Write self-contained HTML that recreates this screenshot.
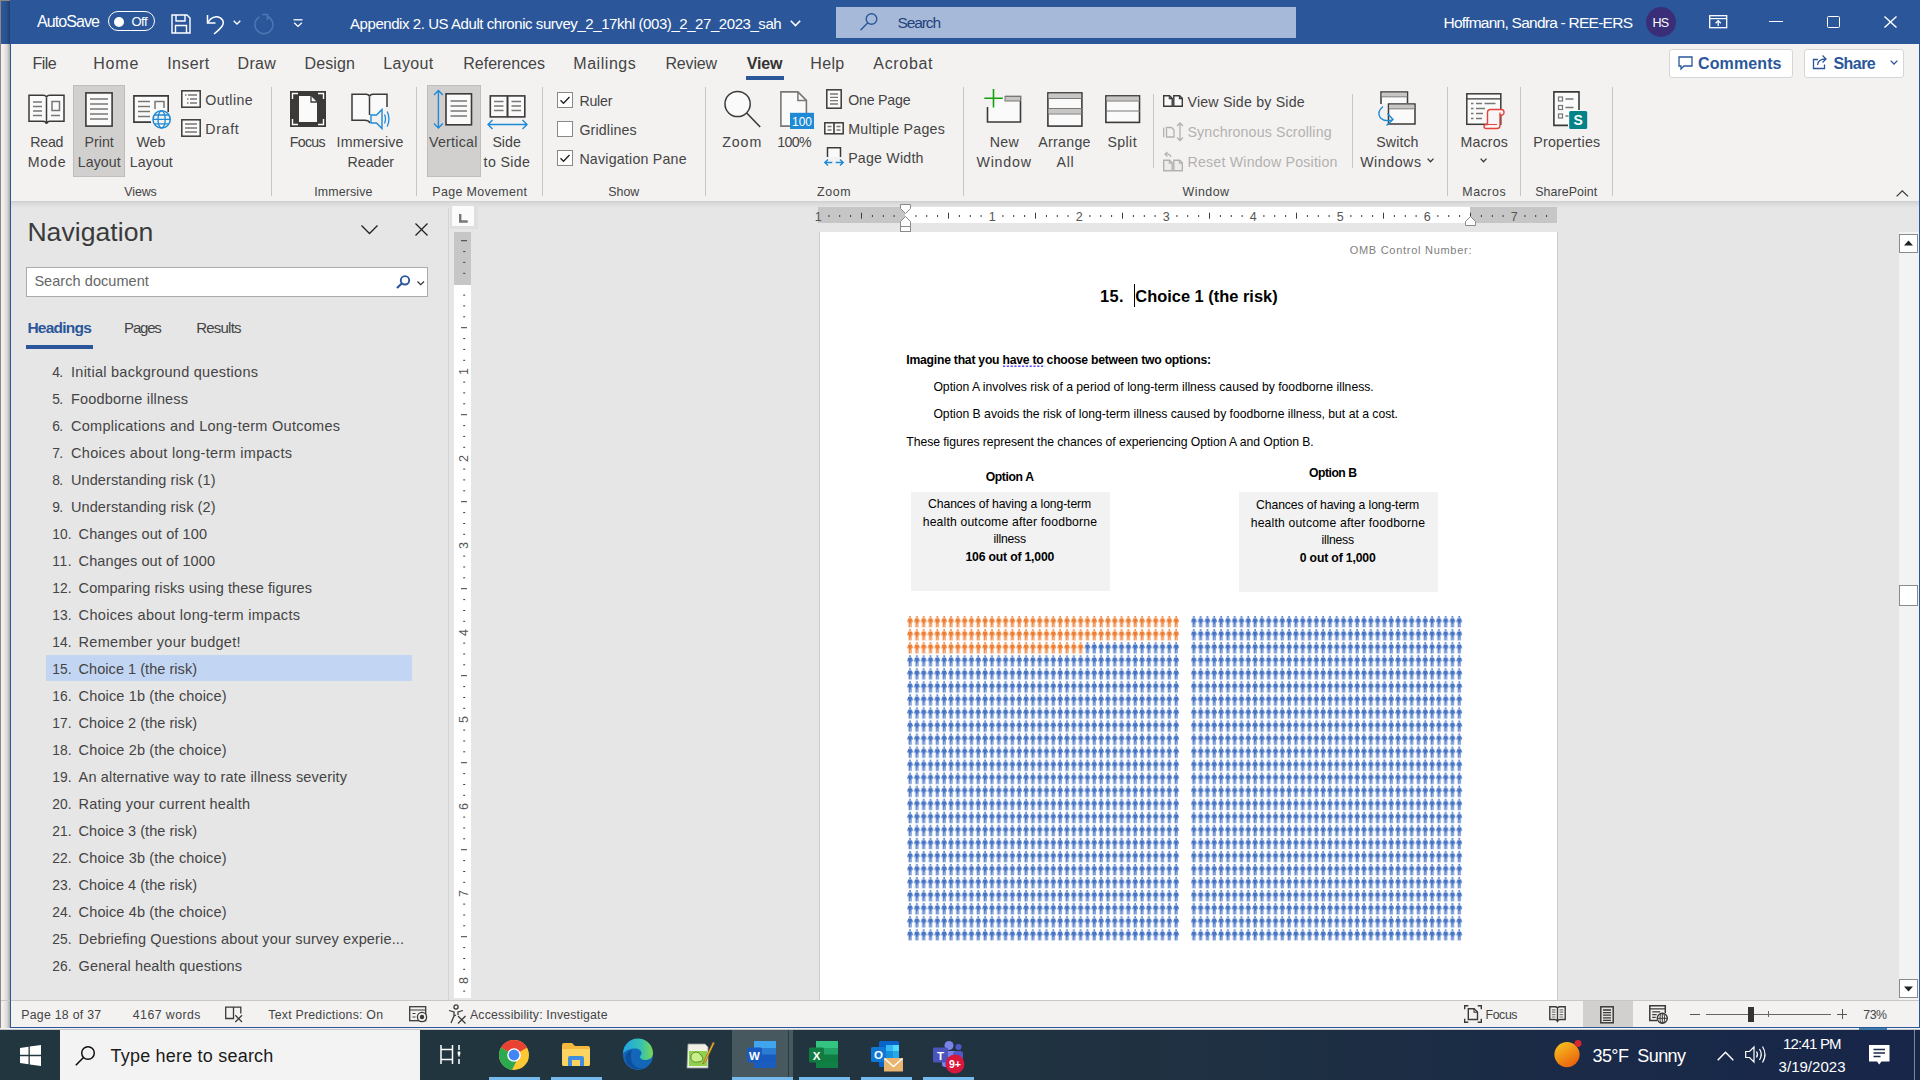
<!DOCTYPE html>
<html lang="en"><head><meta charset="utf-8"><title>Word - Appendix 2</title>
<style>

html,body{margin:0;padding:0;background:#e6e6e6;}
#screen{position:relative;width:1920px;height:1080px;overflow:hidden;background:#e6e6e6;font-family:"Liberation Sans",sans-serif;}
#screen div,#screen svg,#screen span.t{position:absolute;}
#screen svg{overflow:visible;}
.t{white-space:pre;line-height:1;color:#444;}
.v{transform:rotate(-90deg);transform-origin:0 0;}

</style></head>
<body>
<div id="screen">
<div style="left:0px;top:0px;width:10px;height:1030px;background:#f1f0ef;"></div>
<div style="left:1px;top:1px;width:9px;height:43px;background:#2b579a;"></div>
<div style="left:3px;top:0px;width:7px;height:1030px;background:linear-gradient(90deg,rgba(0,0,0,0) 0%,rgba(0,0,0,.10) 60%,rgba(0,0,0,.30) 100%);"></div>
<div style="left:0px;top:0px;width:1px;height:1030px;background:#8c8782;"></div>
<div style="left:0px;top:0px;width:10px;height:1px;background:#8c8782;"></div>
<div style="left:1px;top:1000px;width:9px;height:1px;background:#c8c8c8;"></div>
<div style="left:10px;top:0px;width:1910px;height:44px;background:#2b579a;"></div>
<div style="left:11px;top:44px;width:1908px;height:157px;background:#f3f2f1;"></div>
<div style="left:11px;top:201px;width:1908px;height:7px;background:linear-gradient(180deg,#cfcfcf 0%,#dadada 35%,#e6e6e6 100%);"></div>
<div style="left:10px;top:44px;width:1px;height:984px;background:#2b579a;"></div>
<div style="left:1919px;top:44px;width:1px;height:984px;background:#2b579a;"></div>
<span class="t" style="left:37.0px;top:13.0px;font-size:16px;line-height:17px;letter-spacing:-0.912px;color:#fff;">AutoSave</span>
<div style="left:107.5px;top:11px;width:47.5px;height:20px;box-sizing:border-box;border:1.3px solid #fff;border-radius:10px;"></div>
<div style="left:113.5px;top:16.5px;width:10px;height:10px;background:#fff;border-radius:5px;"></div>
<span class="t" style="left:131.5px;top:14.0px;font-size:13px;line-height:15px;letter-spacing:-0.550px;color:#fff;">Off</span>
<svg style="left:171px;top:14px;" width="20" height="20" viewBox="0 0 20 20"><path d="M1 1h15l3 3v15H1z M5 1v6h9V1 M4.5 19v-7.5h11V19" fill="none" stroke="#fff" stroke-width="1.4"/></svg>
<svg style="left:206px;top:13px;" width="20" height="22" viewBox="0 0 20 22"><path d="M1.5 2v8h8" fill="none" stroke="#fff" stroke-width="1.5"/><path d="M2 9.5C5 3 13 2 16.5 7c2.5 4-1 8-8.5 14" fill="none" stroke="#fff" stroke-width="1.5"/></svg>
<svg style="left:233px;top:20px;" width="8" height="5" viewBox="0 0 8 5"><path d="M.7.7L4 4l3.3-3.3" fill="none" stroke="#fff" stroke-width="1.3"/></svg>
<svg style="left:253px;top:13px;" width="22" height="22" viewBox="0 0 22 22"><path d="M14 3.2A9 9 0 1 1 6.5 3.8" fill="none" stroke="#4f77b3" stroke-width="1.5"/><path d="M9 1.5h5.5V7" fill="none" stroke="#4f77b3" stroke-width="1.5"/></svg>
<svg style="left:293px;top:19px;" width="10" height="9" viewBox="0 0 10 9"><path d="M.5 .8h9" stroke="#fff" stroke-width="1.3"/><path d="M1.2 3.8L5 7.4l3.8-3.6" fill="none" stroke="#fff" stroke-width="1.3"/></svg>
<span class="t" style="left:350.0px;top:15.0px;font-size:15px;line-height:17px;letter-spacing:-0.435px;color:#fff;">Appendix 2. US Adult chronic survey_2_17khl (003)_2_27_2023_sah</span>
<svg style="left:790px;top:20px;" width="11" height="7" viewBox="0 0 11 7"><path d="M.8.8L5.5 5.5 10.2.8" fill="none" stroke="#fff" stroke-width="1.6"/></svg>
<div style="left:836px;top:7px;width:460px;height:31px;background:#a6b9d8;"></div>
<svg style="left:859px;top:12px;" width="20" height="20" viewBox="0 0 20 20"><circle cx="12.5" cy="7" r="5.3" fill="none" stroke="#2b579a" stroke-width="1.4"/><path d="M8.8 10.8L1.5 18.2" stroke="#2b579a" stroke-width="1.4"/></svg>
<span class="t" style="left:897.5px;top:14.0px;font-size:15.5px;line-height:17px;letter-spacing:-1.122px;color:#22427c;">Search</span>
<span class="t" style="left:1443.5px;top:14.0px;font-size:15.5px;line-height:17px;letter-spacing:-0.748px;color:#fff;">Hoffmann, Sandra - REE-ERS</span>
<div style="left:1646px;top:7px;width:30px;height:30px;background:#3b2e78;border-radius:15px;"></div>
<span class="t" style="left:1652.5px;top:16.0px;font-size:12.5px;line-height:14px;letter-spacing:-0.865px;color:#fff;">HS</span>
<svg style="left:1709px;top:15px;" width="19" height="14" viewBox="0 0 19 14"><rect x=".7" y=".7" width="17" height="12" fill="none" stroke="#fff" stroke-width="1.3"/><path d="M.7 3.6h17" stroke="#fff" stroke-width="1.2"/><path d="M9.2 11V5.8M6.6 8.2l2.6-2.6 2.6 2.6" fill="none" stroke="#fff" stroke-width="1.3"/></svg>
<div style="left:1769px;top:20.8px;width:13.5px;height:1.3px;background:#fff;"></div>
<div style="left:1827px;top:16px;width:12.5px;height:12px;box-sizing:border-box;border:1.4px solid #fff;border-radius:1.5px;"></div>
<svg style="left:1884px;top:16px;" width="13" height="12" viewBox="0 0 13 12"><path d="M.5.5l12 11M12.5.5l-12 11" stroke="#fff" stroke-width="1.4"/></svg>
<span class="t" style="left:32.5px;top:55.0px;font-size:16px;line-height:17px;letter-spacing:-0.527px;">File</span>
<span class="t" style="left:93.3px;top:55.0px;font-size:16px;line-height:17px;letter-spacing:0.773px;">Home</span>
<span class="t" style="left:167.2px;top:55.0px;font-size:16px;line-height:17px;letter-spacing:0.397px;">Insert</span>
<span class="t" style="left:237.5px;top:55.0px;font-size:16px;line-height:17px;letter-spacing:0.321px;">Draw</span>
<span class="t" style="left:304.5px;top:55.0px;font-size:16px;line-height:17px;letter-spacing:0.139px;">Design</span>
<span class="t" style="left:383.3px;top:55.0px;font-size:16px;line-height:17px;letter-spacing:0.392px;">Layout</span>
<span class="t" style="left:463.3px;top:55.0px;font-size:16px;line-height:17px;letter-spacing:-0.013px;">References</span>
<span class="t" style="left:573.3px;top:55.0px;font-size:16px;line-height:17px;letter-spacing:0.545px;">Mailings</span>
<span class="t" style="left:665.5px;top:55.0px;font-size:16px;line-height:17px;letter-spacing:-0.192px;">Review</span>
<span class="t" style="left:810.3px;top:55.0px;font-size:16px;line-height:17px;letter-spacing:0.331px;">Help</span>
<span class="t" style="left:873.3px;top:55.0px;font-size:16px;line-height:17px;letter-spacing:0.677px;">Acrobat</span>
<span class="t" style="left:746.7px;top:55.0px;font-size:16px;line-height:17px;letter-spacing:-0.124px;color:#333;font-weight:700;">View</span>
<div style="left:746px;top:76px;width:38px;height:4px;background:#2b579a;"></div>
<div style="left:1668.5px;top:48.5px;width:124px;height:29px;background:#fff;box-sizing:border-box;border:1px solid #d8d6d4;border-radius:3px;"></div>
<svg style="left:1678px;top:56px;" width="15" height="14" viewBox="0 0 15 14"><path d="M1 1h13v9H6l-3 3v-3H1z" fill="none" stroke="#2b579a" stroke-width="1.3"/></svg>
<span class="t" style="left:1698.0px;top:55.0px;font-size:16px;line-height:17px;letter-spacing:0.117px;color:#2b579a;font-weight:700;">Comments</span>
<div style="left:1803.5px;top:48.5px;width:100.5px;height:29px;background:#fff;box-sizing:border-box;border:1px solid #d8d6d4;border-radius:3px;"></div>
<svg style="left:1812px;top:54px;" width="16" height="16" viewBox="0 0 16 16"><path d="M6 5.5H1.5v9h11v-4" fill="none" stroke="#2b579a" stroke-width="1.3"/><path d="M5.5 11c.5-4 3-6 8-6M10.5 1.5l3.5 3.5-3.5 3.5" fill="none" stroke="#2b579a" stroke-width="1.3"/></svg>
<span class="t" style="left:1833.5px;top:55.0px;font-size:16px;line-height:17px;letter-spacing:-0.567px;color:#2b579a;font-weight:700;">Share</span>
<svg style="left:1890px;top:60px;" width="8" height="5" viewBox="0 0 8 5"><path d="M.6.6L4 4l3.4-3.4" fill="none" stroke="#2b579a" stroke-width="1.3"/></svg>
<div style="left:73px;top:85px;width:52px;height:91.5px;background:#d2d0ce;box-sizing:border-box;border:1px solid #c0bebc;"></div>
<div style="left:427px;top:85px;width:54px;height:91.5px;background:#d2d0ce;box-sizing:border-box;border:1px solid #c0bebc;"></div>
<svg style="left:28px;top:94px;" width="37" height="31" viewBox="0 0 37 31"><path d="M1 1.2h14q3 0 3.5 2q.5-2 3.5-2h14v26h-14q-3 0-3.5 2.6q-.5-2.6-3.5-2.6H1z" fill="#fafafa" stroke="#3b3a39" stroke-width="1.5"/><path d="M18.5 3.5v25" stroke="#3b3a39" stroke-width="1.5"/><path d="M5 8h9M5 12.5h9M5 17h9M5 21.5h9M23 21.5h9" stroke="#797775" stroke-width="1.5"/><rect x="24" y="7.5" width="7.5" height="9" fill="none" stroke="#797775" stroke-width="1.5"/></svg>
<span class="t" style="left:30.3px;top:134.0px;font-size:14.2px;line-height:16px;letter-spacing:-0.272px;">Read</span>
<span class="t" style="left:27.7px;top:154.0px;font-size:14.2px;line-height:16px;letter-spacing:0.803px;">Mode</span>
<svg style="left:85px;top:91.5px;" width="28" height="35" viewBox="0 0 28 35"><rect x=".9" y=".9" width="26.2" height="33.2" fill="#fafafa" stroke="#3b3a39" stroke-width="1.6"/><path d="M5 7h18M5 12h18M5 17h18M5 22h18M5 27h18" stroke="#797775" stroke-width="1.5"/></svg>
<span class="t" style="left:84.6px;top:134.0px;font-size:14.2px;line-height:16px;letter-spacing:-0.018px;">Print</span>
<span class="t" style="left:77.7px;top:154.0px;font-size:14.2px;line-height:16px;letter-spacing:0.081px;">Layout</span>
<svg style="left:133px;top:95px;" width="38" height="34" viewBox="0 0 38 34"><path d="M35.2 17V.9H.9v26.2H18" fill="#fafafa" stroke="#3b3a39" stroke-width="1.6"/><path d="M5 6.5h12M5 11.5h12M5 16.5h12M5 21.5h12" stroke="#797775" stroke-width="1.5"/><path d="M22 14V6.5h9V13" fill="none" stroke="#797775" stroke-width="1.5"/><circle cx="28.6" cy="24.4" r="8.6" fill="#f3f2f1" stroke="#1e8ad6" stroke-width="1.5"/><ellipse cx="28.6" cy="24.4" rx="3.6" ry="8.6" fill="none" stroke="#1e8ad6" stroke-width="1.3"/><path d="M20 24.4h17.2M21.2 20h14.8M21.2 28.8h14.8" stroke="#1e8ad6" stroke-width="1.3"/></svg>
<span class="t" style="left:136.4px;top:134.0px;font-size:14.2px;line-height:16px;letter-spacing:0.092px;">Web</span>
<span class="t" style="left:129.8px;top:154.0px;font-size:14.2px;line-height:16px;letter-spacing:0.081px;">Layout</span>
<svg style="left:181px;top:90px;" width="20" height="18" viewBox="0 0 20 18"><rect x=".8" y=".8" width="18.4" height="16.4" fill="#fafafa" stroke="#3b3a39" stroke-width="1.5"/><path d="M4 5h1.5M7 5h9M6 9h1.5M9 9h7M6 13h1.5M9 13h7" stroke="#797775" stroke-width="1.4"/></svg>
<span class="t" style="left:205.3px;top:92.0px;font-size:14.2px;line-height:16px;letter-spacing:0.391px;">Outline</span>
<svg style="left:181px;top:119px;" width="20" height="18" viewBox="0 0 20 18"><rect x=".8" y=".8" width="18.4" height="16.4" fill="#fafafa" stroke="#3b3a39" stroke-width="1.5"/><path d="M4 5h12M4 9h12M4 13h12" stroke="#797775" stroke-width="1.4"/></svg>
<span class="t" style="left:205.3px;top:121.0px;font-size:14.2px;line-height:16px;letter-spacing:0.664px;">Draft</span>
<span class="t" style="left:124.3px;top:185.0px;font-size:12.4px;line-height:14px;letter-spacing:-0.082px;">Views</span>
<div style="left:270.8px;top:87px;width:1px;height:109px;background:#c8c6c4;"></div>
<svg style="left:290px;top:91px;" width="36" height="36" viewBox="0 0 36 36"><rect x="0" y="0" width="36" height="36" fill="#3b3a39"/><path d="M9 5h12l6 6v20H9z" fill="#fafafa"/><path d="M21 5v6h6" fill="none" stroke="#3b3a39" stroke-width="1.3"/><path d="M2.5 8V2.5H8M28 2.5h5.5V8M33.5 28v5.5H28M8 33.5H2.5V28" fill="none" stroke="#fff" stroke-width="1.4"/></svg>
<span class="t" style="left:289.7px;top:134.0px;font-size:14.2px;line-height:16px;letter-spacing:-0.659px;">Focus</span>
<svg style="left:351px;top:93px;" width="40" height="37" viewBox="0 0 40 37"><path d="M36 14V1.3H22q-3 0-3.5 2.4q-.5-2.4-3.500-2.400H1v26h13q3.500 0 5 2.500" fill="#fafafa" stroke="#3b3a39" stroke-width="1.5"/><path d="M18.5 4v18" stroke="#3b3a39" stroke-width="1.5"/><path d="M20 22h5.500l5.500-5.500v19l-5.500-5.500H20z" fill="#f3f2f1" stroke="#1e8ad6" stroke-width="1.4"/><path d="M33.5 21.500q2 4.500 0 9M36.200 18.500q3.500 7.500 0 15" fill="none" stroke="#1e8ad6" stroke-width="1.3"/></svg>
<span class="t" style="left:336.6px;top:134.0px;font-size:14.2px;line-height:16px;letter-spacing:0.172px;">Immersive</span>
<span class="t" style="left:347.6px;top:154.0px;font-size:14.2px;line-height:16px;letter-spacing:-0.026px;">Reader</span>
<span class="t" style="left:314.2px;top:185.0px;font-size:12.4px;line-height:14px;letter-spacing:0.145px;">Immersive</span>
<div style="left:416.1px;top:87px;width:1px;height:109px;background:#c8c6c4;"></div>
<svg style="left:433px;top:89px;" width="40" height="41" viewBox="0 0 40 41"><path d="M5.400 1.500v37M1 6l4.400-4.500L9.800 6M1 34.500l4.400 4.500 4.400-4.500" fill="none" stroke="#1e8ad6" stroke-width="1.4"/><rect x="13" y="4.800" width="25.500" height="31" fill="#fafafa" stroke="#3b3a39" stroke-width="1.6"/><path d="M17.500 12h16.500M17.500 17h16.500M17.500 22h16.500M17.500 27h16.500" stroke="#797775" stroke-width="1.5"/></svg>
<span class="t" style="left:429.0px;top:134.0px;font-size:14.2px;line-height:16px;letter-spacing:0.268px;">Vertical</span>
<svg style="left:487px;top:95px;" width="41" height="35" viewBox="0 0 41 35"><rect x="3.300" y=".9" width="34.500" height="21" fill="#fafafa" stroke="#3b3a39" stroke-width="1.6"/><path d="M20.500 1v21" stroke="#3b3a39" stroke-width="2"/><path d="M7 6.500h9.500M7 11h9.500M7 15.500h9.500M24.500 6.500H34M24.500 11H34M24.500 15.500H34" stroke="#797775" stroke-width="1.5"/><path d="M1 29.500h39M5.500 25l-4.500 4.500 4.500 4.500M35.500 25l4.500 4.500-4.500 4.500" fill="none" stroke="#1e8ad6" stroke-width="1.4"/></svg>
<span class="t" style="left:492.4px;top:134.0px;font-size:14.2px;line-height:16px;">Side</span>
<span class="t" style="left:483.6px;top:154.0px;font-size:14.2px;line-height:16px;letter-spacing:0.355px;">to Side</span>
<span class="t" style="left:432.3px;top:185.0px;font-size:12.4px;line-height:14px;letter-spacing:0.373px;">Page Movement</span>
<div style="left:541.8px;top:87px;width:1px;height:109px;background:#c8c6c4;"></div>
<svg style="left:557px;top:92px;" width="16" height="16" viewBox="0 0 16 16"><rect x=".5" y=".5" width="15" height="15" fill="#fff" stroke="#8a8886"/><path d="M3.500 8.300l3 3 6-6.300" fill="none" stroke="#222" stroke-width="1.400"/></svg>
<span class="t" style="left:579.4px;top:93.0px;font-size:14.2px;line-height:16px;letter-spacing:-0.201px;">Ruler</span>
<svg style="left:557px;top:121px;" width="16" height="16" viewBox="0 0 16 16"><rect x=".5" y=".5" width="15" height="15" fill="#fff" stroke="#8a8886"/></svg>
<span class="t" style="left:579.4px;top:122.0px;font-size:14.2px;line-height:16px;letter-spacing:0.165px;">Gridlines</span>
<svg style="left:557px;top:150px;" width="16" height="16" viewBox="0 0 16 16"><rect x=".5" y=".5" width="15" height="15" fill="#fff" stroke="#8a8886"/><path d="M3.500 8.300l3 3 6-6.300" fill="none" stroke="#222" stroke-width="1.400"/></svg>
<span class="t" style="left:579.4px;top:151.0px;font-size:14.2px;line-height:16px;letter-spacing:0.220px;">Navigation Pane</span>
<span class="t" style="left:608.3px;top:185.0px;font-size:12.4px;line-height:14px;letter-spacing:-0.032px;">Show</span>
<div style="left:705.0px;top:87px;width:1px;height:109px;background:#c8c6c4;"></div>
<svg style="left:723px;top:90px;" width="40" height="40" viewBox="0 0 40 40"><circle cx="14.600" cy="14" r="12.600" fill="#fafafa" stroke="#3b3a39" stroke-width="1.500"/><path d="M23.700 23l13.500 14" stroke="#3b3a39" stroke-width="1.600"/></svg>
<span class="t" style="left:722.3px;top:134.0px;font-size:14.2px;line-height:16px;letter-spacing:0.878px;">Zoom</span>
<svg style="left:780px;top:91px;" width="35" height="39" viewBox="0 0 35 39"><path d="M.9.900h17l8.500 8.500v25.700H.9z" fill="#fafafa" stroke="#797775" stroke-width="1.600"/><path d="M17.900 1v8.500h8.500" fill="none" stroke="#797775" stroke-width="1.500"/><rect x="10" y="21.800" width="24" height="16.200" fill="#1e8ad6"/><text x="22" y="35" font-family="Liberation Sans, sans-serif" font-size="13" fill="#fff" text-anchor="middle" textLength="20" lengthAdjust="spacingAndGlyphs">100</text></svg>
<span class="t" style="left:777.3px;top:134.0px;font-size:14.2px;line-height:16px;letter-spacing:-0.695px;">100%</span>
<svg style="left:826px;top:89px;" width="16" height="20" viewBox="0 0 16 20"><rect x=".8" y=".8" width="14.400" height="18.400" fill="#fafafa" stroke="#3b3a39" stroke-width="1.500"/><path d="M4 5h8M4 8.300h8M4 11.600h8M4 15h8" stroke="#797775" stroke-width="1.300"/></svg>
<span class="t" style="left:848.2px;top:92.0px;font-size:14.2px;line-height:16px;letter-spacing:-0.213px;">One Page</span>
<svg style="left:824px;top:122px;" width="20" height="13" viewBox="0 0 20 13"><rect x=".8" y=".8" width="18.400" height="11" fill="#fafafa" stroke="#3b3a39" stroke-width="1.500"/><path d="M10 1v11" stroke="#3b3a39" stroke-width="1.600"/><path d="M3.500 4.500h4M3.500 8h4M12.500 4.500h4M12.500 8h4" stroke="#797775" stroke-width="1.300"/></svg>
<span class="t" style="left:848.2px;top:121.0px;font-size:14.2px;line-height:16px;letter-spacing:0.280px;">Multiple Pages</span>
<svg style="left:824px;top:147px;" width="20" height="20" viewBox="0 0 20 20"><path d="M3.500 10V.8h13V10" fill="#fafafa" stroke="#3b3a39" stroke-width="1.500"/><path d="M.8 15.500h7.500M4 12.500l-3.200 3 3.200 3M11.700 15.500h7.500M16 12.500l3.200 3-3.200 3" fill="none" stroke="#1e8ad6" stroke-width="1.400"/></svg>
<span class="t" style="left:848.2px;top:150.0px;font-size:14.2px;line-height:16px;letter-spacing:0.218px;">Page Width</span>
<span class="t" style="left:817.0px;top:185.0px;font-size:12.4px;line-height:14px;letter-spacing:0.609px;">Zoom</span>
<div style="left:962.9px;top:87px;width:1px;height:109px;background:#c8c6c4;"></div>
<svg style="left:984px;top:89px;" width="38" height="34" viewBox="0 0 38 34"><path d="M3.500 18V33h33V7.500H21" fill="#fafafa" stroke="#3b3a39" stroke-width="1.600"/><rect x="21" y="7.500" width="15.500" height="4.500" fill="#c8c6c4" stroke="#797775" stroke-width="1"/><path d="M9.500 0v18.500M.3 9.300h18.500" stroke="#13a10e" stroke-width="1.600"/></svg>
<span class="t" style="left:989.7px;top:134.0px;font-size:14.2px;line-height:16px;letter-spacing:0.359px;">New</span>
<span class="t" style="left:976.5px;top:154.0px;font-size:14.2px;line-height:16px;letter-spacing:0.788px;">Window</span>
<svg style="left:1047px;top:91.5px;" width="36" height="35" viewBox="0 0 36 35"><rect x=".9" y=".9" width="34" height="33.200" fill="#fafafa" stroke="#3b3a39" stroke-width="1.600"/><rect x="1.600" y="1.600" width="32.600" height="4.500" fill="#c8c6c4"/><rect x="1.600" y="17" width="32.600" height="4.500" fill="#c8c6c4"/><path d="M1 6.500h34M1 16.500h34M1 22h34" stroke="#797775" stroke-width="1.200"/></svg>
<span class="t" style="left:1038.2px;top:134.0px;font-size:14.2px;line-height:16px;letter-spacing:0.304px;">Arrange</span>
<span class="t" style="left:1056.5px;top:154.0px;font-size:14.2px;line-height:16px;letter-spacing:0.717px;">All</span>
<svg style="left:1104.5px;top:95px;" width="36" height="28" viewBox="0 0 36 28"><rect x=".9" y=".9" width="33.600" height="26.500" fill="#fafafa" stroke="#3b3a39" stroke-width="1.600"/><rect x="1.600" y="1.600" width="32.200" height="4" fill="#c8c6c4"/><path d="M1 6h34M1 16h34" stroke="#797775" stroke-width="1.200"/></svg>
<span class="t" style="left:1107.4px;top:134.0px;font-size:14.2px;line-height:16px;letter-spacing:0.400px;">Split</span>
<div style="left:1152.9px;top:94px;width:1px;height:74px;background:#c8c6c4;"></div>
<svg style="left:1163px;top:95px;" width="20" height="12" viewBox="0 0 20 12"><path d="M.7 11.300V.7h5.800l2.700 2.700v7.900zM10.800 11.300V.7h5.800l2.700 2.700v7.900z" fill="#fafafa" stroke="#3b3a39" stroke-width="1.400"/><path d="M6.300.7v2.900h2.900M16.400.7v2.900h2.900" fill="none" stroke="#3b3a39" stroke-width="1.100"/></svg>
<span class="t" style="left:1187.5px;top:94.0px;font-size:14.2px;line-height:16px;letter-spacing:0.188px;">View Side by Side</span>
<svg style="left:1163px;top:121.5px;" width="21" height="19" viewBox="0 0 21 19"><path d="M.7 5.500v9.800M3.500 15V5.500h5l2.500 2.500v7z" fill="none" stroke="#b3b1af" stroke-width="1.300"/><path d="M17 1v17M14 4l3-3 3 3M14 15.500l3 3 3-3" fill="none" stroke="#b3b1af" stroke-width="1.300"/></svg>
<span class="t" style="left:1187.5px;top:124.0px;font-size:14.2px;line-height:16px;letter-spacing:0.147px;color:#b3b1af;">Synchronous Scrolling</span>
<svg style="left:1163px;top:151.5px;" width="20" height="19.5" viewBox="0 0 20 19.5"><g transform="translate(0,7.500)"><path d="M.7 11.300V.7h5.800l2.700 2.700v7.900zM10.800 11.300V.7h5.800l2.700 2.700v7.900z" fill="#ececec" stroke="#b3b1af" stroke-width="1.400"/><path d="M6.300.7v2.900h2.900M16.400.7v2.900h2.900" fill="none" stroke="#b3b1af" stroke-width="1.100"/></g><path d="M8 5q-1-3.500-5.500-3M4.500 0L2 2.200 4.500 4.500" fill="none" stroke="#b3b1af" stroke-width="1.200"/></svg>
<span class="t" style="left:1187.5px;top:154.0px;font-size:14.2px;line-height:16px;letter-spacing:0.201px;color:#b3b1af;">Reset Window Position</span>
<div style="left:1351.8px;top:94px;width:1px;height:74px;background:#c8c6c4;"></div>
<svg style="left:1377px;top:91px;" width="40" height="38" viewBox="0 0 40 38"><path d="M4 13V1h26.500v11" fill="#fafafa" stroke="#3b3a39" stroke-width="1.500"/><rect x="4.700" y="1.700" width="25" height="3.600" fill="#c8c6c4"/><path d="M4 5.800h26.500" stroke="#797775" stroke-width="1"/><rect x="11.500" y="13" width="26.500" height="20" fill="#fafafa" stroke="#3b3a39" stroke-width="1.500"/><rect x="12.200" y="13.700" width="25" height="3.600" fill="#c8c6c4"/><path d="M11.500 17.800H38" stroke="#797775" stroke-width="1"/><path d="M6 15.500q-7 6-2.500 11.500q4 4 12 1.800M10.500 22.500l5.500 6-6.500 6" fill="none" stroke="#1e8ad6" stroke-width="1.400"/></svg>
<span class="t" style="left:1376.3px;top:134.0px;font-size:14.2px;line-height:16px;letter-spacing:0.083px;">Switch</span>
<span class="t" style="left:1360.2px;top:154.0px;font-size:14.2px;line-height:16px;letter-spacing:0.541px;">Windows</span>
<svg style="left:1426.5px;top:158px;" width="8" height="5" viewBox="0 0 8 5"><path d="M.6.600L3.500 3.800 6.500.6" fill="none" stroke="#3b3a39" stroke-width="1.300"/></svg>
<span class="t" style="left:1182.5px;top:185.0px;font-size:12.4px;line-height:14px;letter-spacing:0.486px;">Window</span>
<div style="left:1446.9px;top:87px;width:1px;height:109px;background:#c8c6c4;"></div>
<svg style="left:1466px;top:92.5px;" width="39" height="37" viewBox="0 0 39 37"><rect x=".8" y=".8" width="34" height="30.500" fill="#fafafa" stroke="#3b3a39" stroke-width="1.500"/><path d="M1 5.800h34" stroke="#3b3a39" stroke-width="1.300"/><path d="M5 10.500h2.500M10 10.500h6M18.500 10.500h11M5 15.500h2.500M10 15.500h9M5 20.500h2.500M10 20.500h7M5 25.500h2.500M10 25.500h6" stroke="#797775" stroke-width="1.300"/><path d="M21.500 31.500V19.500q0-3 3-3h11q2.500 0 2.500 2.800t-2.500 2.700H34v10.500q0 3-3 3H20.500q-2.500 0-2.500-2t2.500-2z" fill="#f6f6f6" stroke="#e8403a" stroke-width="1.400"/><path d="M21.500 31.500h9.500M34 19.500v2.500" stroke="#e8403a" stroke-width="1.200" fill="none"/></svg>
<span class="t" style="left:1460.4px;top:134.0px;font-size:14.2px;line-height:16px;letter-spacing:0.178px;">Macros</span>
<svg style="left:1480px;top:158px;" width="8" height="5" viewBox="0 0 8 5"><path d="M.6.600L3.500 3.800 6.500.6" fill="none" stroke="#3b3a39" stroke-width="1.300"/></svg>
<span class="t" style="left:1462.3px;top:185.0px;font-size:12.4px;line-height:14px;letter-spacing:0.536px;">Macros</span>
<div style="left:1519.8px;top:87px;width:1px;height:109px;background:#c8c6c4;"></div>
<svg style="left:1553px;top:91px;" width="35" height="38" viewBox="0 0 35 38"><path d="M26 19V.9H.9v33.500H15" fill="#fafafa" stroke="#3b3a39" stroke-width="1.600"/><rect x="5.500" y="6" width="4" height="4" fill="none" stroke="#797775" stroke-width="1.200"/><rect x="5.500" y="14.500" width="4" height="4" fill="none" stroke="#797775" stroke-width="1.200"/><rect x="5.500" y="23" width="4" height="4" fill="none" stroke="#797775" stroke-width="1.200"/><path d="M12.500 8h8M12.500 16.500h8M12.500 25h3" stroke="#797775" stroke-width="1.300"/><rect x="16.200" y="20" width="18" height="18" rx="1.500" fill="#038387"/><text x="25.200" y="34" font-family="Liberation Sans, sans-serif" font-size="14" font-weight="700" fill="#fff" text-anchor="middle">S</text></svg>
<span class="t" style="left:1533.3px;top:134.0px;font-size:14.2px;line-height:16px;letter-spacing:0.238px;">Properties</span>
<span class="t" style="left:1535.2px;top:185.0px;font-size:12.4px;line-height:14px;letter-spacing:0.077px;">SharePoint</span>
<div style="left:1612.0px;top:87px;width:1px;height:109px;background:#c8c6c4;"></div>
<svg style="left:1896px;top:189.5px;" width="13" height="7" viewBox="0 0 13 7"><path d="M.6 6.400L6.300.8 12 6.400" fill="none" stroke="#3b3a39" stroke-width="1.300"/></svg>
<span class="t" style="left:27.4px;top:217.0px;font-size:26.6px;line-height:30px;letter-spacing:0.027px;color:#3a3a3a;">Navigation</span>
<svg style="left:361px;top:225px;" width="17" height="9" viewBox="0 0 17 9"><path d="M.5.500l8 8 8-8" fill="none" stroke="#222" stroke-width="1.300"/></svg>
<svg style="left:414.5px;top:222.5px;" width="13" height="13" viewBox="0 0 13 13"><path d="M.5.500l12 12M12.500.5l-12 12" stroke="#222" stroke-width="1.300"/></svg>
<div style="left:26px;top:267px;width:402px;height:30px;background:#fff;box-sizing:border-box;border:1px solid #ababab;"></div>
<span class="t" style="left:34.4px;top:273.0px;font-size:14.5px;line-height:16px;letter-spacing:0.061px;color:#666;">Search document</span>
<svg style="left:396px;top:274.5px;" width="15" height="14" viewBox="0 0 15 14"><circle cx="9" cy="5.300" r="4.200" fill="none" stroke="#2b579a" stroke-width="1.900"/><path d="M6 8.300L1 13" stroke="#2b579a" stroke-width="2.200"/></svg>
<svg style="left:417px;top:280.5px;" width="8" height="5" viewBox="0 0 8 5"><path d="M.5.500L3.700 3.700 7 .5" fill="none" stroke="#333" stroke-width="1.200"/></svg>
<span class="t" style="left:27.4px;top:319.0px;font-size:15.5px;line-height:17px;letter-spacing:-0.752px;color:#2b579a;font-weight:700;">Headings</span>
<div style="left:26px;top:345px;width:67px;height:4px;background:#2b579a;"></div>
<span class="t" style="left:124.1px;top:319.0px;font-size:15px;line-height:17px;letter-spacing:-1.208px;">Pages</span>
<span class="t" style="left:196.3px;top:319.0px;font-size:15px;line-height:17px;letter-spacing:-0.803px;">Results</span>
<div style="left:46px;top:655px;width:366px;height:26px;background:#c2d5f2;"></div>
<span class="t" style="left:52.2px;top:365.0px;font-size:13.8px;line-height:15px;letter-spacing:-0.706px;">4.</span>
<span class="t" style="left:71.0px;top:364.0px;font-size:14.5px;line-height:16px;letter-spacing:0.268px;">Initial background questions</span>
<span class="t" style="left:52.2px;top:392.0px;font-size:13.8px;line-height:15px;letter-spacing:-0.706px;">5.</span>
<span class="t" style="left:71.0px;top:391.0px;font-size:14.5px;line-height:16px;letter-spacing:0.159px;">Foodborne illness</span>
<span class="t" style="left:52.2px;top:419.0px;font-size:13.8px;line-height:15px;letter-spacing:-0.706px;">6.</span>
<span class="t" style="left:71.0px;top:418.0px;font-size:14.5px;line-height:16px;letter-spacing:0.271px;">Complications and Long-term Outcomes</span>
<span class="t" style="left:52.2px;top:446.0px;font-size:13.8px;line-height:15px;letter-spacing:-0.706px;">7.</span>
<span class="t" style="left:71.0px;top:445.0px;font-size:14.5px;line-height:16px;letter-spacing:0.301px;">Choices about long-term impacts</span>
<span class="t" style="left:52.2px;top:473.0px;font-size:13.8px;line-height:15px;letter-spacing:-0.706px;">8.</span>
<span class="t" style="left:71.0px;top:472.0px;font-size:14.5px;line-height:16px;letter-spacing:0.088px;">Understanding risk (1)</span>
<span class="t" style="left:52.2px;top:500.0px;font-size:13.8px;line-height:15px;letter-spacing:-0.706px;">9.</span>
<span class="t" style="left:71.0px;top:499.0px;font-size:14.5px;line-height:16px;letter-spacing:0.088px;">Understanding risk (2)</span>
<span class="t" style="left:52.2px;top:527.0px;font-size:13.8px;line-height:15px;letter-spacing:0.110px;">10.</span>
<span class="t" style="left:78.6px;top:526.0px;font-size:14.5px;line-height:16px;letter-spacing:0.108px;">Changes out of 100</span>
<span class="t" style="left:52.2px;top:554.0px;font-size:13.8px;line-height:15px;letter-spacing:0.622px;">11.</span>
<span class="t" style="left:78.6px;top:553.0px;font-size:14.5px;line-height:16px;letter-spacing:0.098px;">Changes out of 1000</span>
<span class="t" style="left:52.2px;top:581.0px;font-size:13.8px;line-height:15px;letter-spacing:0.110px;">12.</span>
<span class="t" style="left:78.6px;top:580.0px;font-size:14.5px;line-height:16px;letter-spacing:0.086px;">Comparing risks using these figures</span>
<span class="t" style="left:52.2px;top:608.0px;font-size:13.8px;line-height:15px;letter-spacing:0.110px;">13.</span>
<span class="t" style="left:78.6px;top:607.0px;font-size:14.5px;line-height:16px;letter-spacing:0.315px;">Choices about long-term impacts</span>
<span class="t" style="left:52.2px;top:635.0px;font-size:13.8px;line-height:15px;letter-spacing:0.110px;">14.</span>
<span class="t" style="left:78.6px;top:634.0px;font-size:14.5px;line-height:16px;letter-spacing:0.277px;">Remember your budget!</span>
<span class="t" style="left:52.2px;top:662.0px;font-size:13.8px;line-height:15px;letter-spacing:0.110px;">15.</span>
<span class="t" style="left:78.6px;top:661.0px;font-size:14.5px;line-height:16px;letter-spacing:0.042px;">Choice 1 (the risk)</span>
<span class="t" style="left:52.2px;top:689.0px;font-size:13.8px;line-height:15px;letter-spacing:0.110px;">16.</span>
<span class="t" style="left:78.6px;top:688.0px;font-size:14.5px;line-height:16px;letter-spacing:0.134px;">Choice 1b (the choice)</span>
<span class="t" style="left:52.2px;top:716.0px;font-size:13.8px;line-height:15px;letter-spacing:0.110px;">17.</span>
<span class="t" style="left:78.6px;top:715.0px;font-size:14.5px;line-height:16px;letter-spacing:0.042px;">Choice 2 (the risk)</span>
<span class="t" style="left:52.2px;top:743.0px;font-size:13.8px;line-height:15px;letter-spacing:0.110px;">18.</span>
<span class="t" style="left:78.6px;top:742.0px;font-size:14.5px;line-height:16px;letter-spacing:0.134px;">Choice 2b (the choice)</span>
<span class="t" style="left:52.2px;top:770.0px;font-size:13.8px;line-height:15px;letter-spacing:0.110px;">19.</span>
<span class="t" style="left:78.6px;top:769.0px;font-size:14.5px;line-height:16px;letter-spacing:0.154px;">An alternative way to rate illness severity</span>
<span class="t" style="left:52.2px;top:797.0px;font-size:13.8px;line-height:15px;letter-spacing:0.110px;">20.</span>
<span class="t" style="left:78.6px;top:796.0px;font-size:14.5px;line-height:16px;letter-spacing:0.182px;">Rating your current health</span>
<span class="t" style="left:52.2px;top:824.0px;font-size:13.8px;line-height:15px;letter-spacing:0.110px;">21.</span>
<span class="t" style="left:78.6px;top:823.0px;font-size:14.5px;line-height:16px;letter-spacing:0.042px;">Choice 3 (the risk)</span>
<span class="t" style="left:52.2px;top:851.0px;font-size:13.8px;line-height:15px;letter-spacing:0.110px;">22.</span>
<span class="t" style="left:78.6px;top:850.0px;font-size:14.5px;line-height:16px;letter-spacing:0.134px;">Choice 3b (the choice)</span>
<span class="t" style="left:52.2px;top:878.0px;font-size:13.8px;line-height:15px;letter-spacing:0.110px;">23.</span>
<span class="t" style="left:78.6px;top:877.0px;font-size:14.5px;line-height:16px;letter-spacing:0.042px;">Choice 4 (the risk)</span>
<span class="t" style="left:52.2px;top:905.0px;font-size:13.8px;line-height:15px;letter-spacing:0.110px;">24.</span>
<span class="t" style="left:78.6px;top:904.0px;font-size:14.5px;line-height:16px;letter-spacing:0.134px;">Choice 4b (the choice)</span>
<span class="t" style="left:52.2px;top:932.0px;font-size:13.8px;line-height:15px;letter-spacing:0.110px;">25.</span>
<span class="t" style="left:78.6px;top:931.0px;font-size:14.5px;line-height:16px;letter-spacing:0.147px;">Debriefing Questions about your survey experie...</span>
<span class="t" style="left:52.2px;top:959.0px;font-size:13.8px;line-height:15px;letter-spacing:0.110px;">26.</span>
<span class="t" style="left:78.6px;top:958.0px;font-size:14.5px;line-height:16px;letter-spacing:0.095px;">General health questions</span>
<div style="left:448px;top:208px;width:1px;height:792px;background:#d4d4d4;"></div>
<div style="left:450px;top:203px;width:28px;height:26px;background:#dfdfdf;"></div>
<div style="left:452px;top:205.5px;width:21.5px;height:20px;background:#fbfbfb;"></div>
<svg style="left:458.5px;top:213.5px;" width="9" height="9" viewBox="0 0 9 9"><path d="M1.200 0v7.500h7.500" fill="none" stroke="#777" stroke-width="2.400"/></svg>
<div style="left:454px;top:232px;width:17px;height:766px;background:#fff;"></div>
<div style="left:454px;top:232px;width:17px;height:53px;background:#c6c6c6;"></div>
<svg style="left:454px;top:232px;" width="17" height="766" viewBox="0 0 17 766"><rect x="7" y="8.2" width="6" height="1" fill="#3c3c3c"/><rect x="9.200" y="19.1" width="2" height="1" fill="#3c3c3c"/><rect x="9.200" y="29.9" width="2" height="1" fill="#3c3c3c"/><rect x="9.200" y="40.8" width="2" height="1" fill="#3c3c3c"/><rect x="9.200" y="62.6" width="2" height="1" fill="#3c3c3c"/><rect x="9.200" y="73.4" width="2" height="1" fill="#3c3c3c"/><rect x="9.200" y="84.3" width="2" height="1" fill="#3c3c3c"/><rect x="7" y="95.2" width="6" height="1" fill="#3c3c3c"/><rect x="9.200" y="106.1" width="2" height="1" fill="#3c3c3c"/><rect x="9.200" y="116.9" width="2" height="1" fill="#3c3c3c"/><rect x="9.200" y="127.8" width="2" height="1" fill="#3c3c3c"/><rect x="9.200" y="149.6" width="2" height="1" fill="#3c3c3c"/><rect x="9.200" y="160.4" width="2" height="1" fill="#3c3c3c"/><rect x="9.200" y="171.3" width="2" height="1" fill="#3c3c3c"/><rect x="7" y="182.2" width="6" height="1" fill="#3c3c3c"/><rect x="9.200" y="193.1" width="2" height="1" fill="#3c3c3c"/><rect x="9.200" y="203.9" width="2" height="1" fill="#3c3c3c"/><rect x="9.200" y="214.8" width="2" height="1" fill="#3c3c3c"/><rect x="9.200" y="236.6" width="2" height="1" fill="#3c3c3c"/><rect x="9.200" y="247.4" width="2" height="1" fill="#3c3c3c"/><rect x="9.200" y="258.3" width="2" height="1" fill="#3c3c3c"/><rect x="7" y="269.2" width="6" height="1" fill="#3c3c3c"/><rect x="9.200" y="280.1" width="2" height="1" fill="#3c3c3c"/><rect x="9.200" y="291.0" width="2" height="1" fill="#3c3c3c"/><rect x="9.200" y="301.8" width="2" height="1" fill="#3c3c3c"/><rect x="9.200" y="323.6" width="2" height="1" fill="#3c3c3c"/><rect x="9.200" y="334.5" width="2" height="1" fill="#3c3c3c"/><rect x="9.200" y="345.3" width="2" height="1" fill="#3c3c3c"/><rect x="7" y="356.2" width="6" height="1" fill="#3c3c3c"/><rect x="9.200" y="367.1" width="2" height="1" fill="#3c3c3c"/><rect x="9.200" y="378.0" width="2" height="1" fill="#3c3c3c"/><rect x="9.200" y="388.8" width="2" height="1" fill="#3c3c3c"/><rect x="9.200" y="410.6" width="2" height="1" fill="#3c3c3c"/><rect x="9.200" y="421.5" width="2" height="1" fill="#3c3c3c"/><rect x="9.200" y="432.3" width="2" height="1" fill="#3c3c3c"/><rect x="7" y="443.2" width="6" height="1" fill="#3c3c3c"/><rect x="9.200" y="454.1" width="2" height="1" fill="#3c3c3c"/><rect x="9.200" y="465.0" width="2" height="1" fill="#3c3c3c"/><rect x="9.200" y="475.8" width="2" height="1" fill="#3c3c3c"/><rect x="9.200" y="497.6" width="2" height="1" fill="#3c3c3c"/><rect x="9.200" y="508.5" width="2" height="1" fill="#3c3c3c"/><rect x="9.200" y="519.3" width="2" height="1" fill="#3c3c3c"/><rect x="7" y="530.2" width="6" height="1" fill="#3c3c3c"/><rect x="9.200" y="541.1" width="2" height="1" fill="#3c3c3c"/><rect x="9.200" y="552.0" width="2" height="1" fill="#3c3c3c"/><rect x="9.200" y="562.8" width="2" height="1" fill="#3c3c3c"/><rect x="9.200" y="584.6" width="2" height="1" fill="#3c3c3c"/><rect x="9.200" y="595.5" width="2" height="1" fill="#3c3c3c"/><rect x="9.200" y="606.3" width="2" height="1" fill="#3c3c3c"/><rect x="7" y="617.2" width="6" height="1" fill="#3c3c3c"/><rect x="9.200" y="628.1" width="2" height="1" fill="#3c3c3c"/><rect x="9.200" y="639.0" width="2" height="1" fill="#3c3c3c"/><rect x="9.200" y="649.8" width="2" height="1" fill="#3c3c3c"/><rect x="9.200" y="671.6" width="2" height="1" fill="#3c3c3c"/><rect x="9.200" y="682.5" width="2" height="1" fill="#3c3c3c"/><rect x="9.200" y="693.3" width="2" height="1" fill="#3c3c3c"/><rect x="7" y="704.2" width="6" height="1" fill="#3c3c3c"/><rect x="9.200" y="715.1" width="2" height="1" fill="#3c3c3c"/><rect x="9.200" y="726.0" width="2" height="1" fill="#3c3c3c"/><rect x="9.200" y="736.8" width="2" height="1" fill="#3c3c3c"/><rect x="9.200" y="758.6" width="2" height="1" fill="#3c3c3c"/></svg>
<span class="t v" style="left:457.3px;top:375.0px;font-size:12.5px;line-height:14px;color:#555;">1</span>
<span class="t v" style="left:457.3px;top:462.0px;font-size:12.5px;line-height:14px;color:#555;">2</span>
<span class="t v" style="left:457.3px;top:549.0px;font-size:12.5px;line-height:14px;color:#555;">3</span>
<span class="t v" style="left:457.3px;top:636.0px;font-size:12.5px;line-height:14px;color:#555;">4</span>
<span class="t v" style="left:457.3px;top:723.0px;font-size:12.5px;line-height:14px;color:#555;">5</span>
<span class="t v" style="left:457.3px;top:810.0px;font-size:12.5px;line-height:14px;color:#555;">6</span>
<span class="t v" style="left:457.3px;top:897.0px;font-size:12.5px;line-height:14px;color:#555;">7</span>
<span class="t v" style="left:457.3px;top:984.0px;font-size:12.5px;line-height:14px;color:#555;">8</span>
<div style="left:818px;top:207px;width:739px;height:16px;background:#fff;"></div>
<div style="left:818px;top:207px;width:87px;height:16px;background:#c6c6c6;"></div>
<div style="left:1470px;top:207px;width:87px;height:16px;background:#c6c6c6;"></div>
<svg style="left:818px;top:207px;" width="739" height="16" viewBox="0 0 739 16"><rect x="10.4" y="8" width="1" height="2" fill="#3c3c3c"/><rect x="21.2" y="8" width="1" height="2" fill="#3c3c3c"/><rect x="32.1" y="8" width="1" height="2" fill="#3c3c3c"/><rect x="43.0" y="5.700" width="1" height="6" fill="#3c3c3c"/><rect x="53.9" y="8" width="1" height="2" fill="#3c3c3c"/><rect x="64.8" y="8" width="1" height="2" fill="#3c3c3c"/><rect x="75.6" y="8" width="1" height="2" fill="#3c3c3c"/><rect x="97.4" y="8" width="1" height="2" fill="#3c3c3c"/><rect x="108.2" y="8" width="1" height="2" fill="#3c3c3c"/><rect x="119.1" y="8" width="1" height="2" fill="#3c3c3c"/><rect x="130.0" y="5.700" width="1" height="6" fill="#3c3c3c"/><rect x="140.9" y="8" width="1" height="2" fill="#3c3c3c"/><rect x="151.8" y="8" width="1" height="2" fill="#3c3c3c"/><rect x="162.6" y="8" width="1" height="2" fill="#3c3c3c"/><rect x="184.4" y="8" width="1" height="2" fill="#3c3c3c"/><rect x="195.2" y="8" width="1" height="2" fill="#3c3c3c"/><rect x="206.1" y="8" width="1" height="2" fill="#3c3c3c"/><rect x="217.0" y="5.700" width="1" height="6" fill="#3c3c3c"/><rect x="227.9" y="8" width="1" height="2" fill="#3c3c3c"/><rect x="238.8" y="8" width="1" height="2" fill="#3c3c3c"/><rect x="249.6" y="8" width="1" height="2" fill="#3c3c3c"/><rect x="271.4" y="8" width="1" height="2" fill="#3c3c3c"/><rect x="282.2" y="8" width="1" height="2" fill="#3c3c3c"/><rect x="293.1" y="8" width="1" height="2" fill="#3c3c3c"/><rect x="304.0" y="5.700" width="1" height="6" fill="#3c3c3c"/><rect x="314.9" y="8" width="1" height="2" fill="#3c3c3c"/><rect x="325.8" y="8" width="1" height="2" fill="#3c3c3c"/><rect x="336.6" y="8" width="1" height="2" fill="#3c3c3c"/><rect x="358.4" y="8" width="1" height="2" fill="#3c3c3c"/><rect x="369.2" y="8" width="1" height="2" fill="#3c3c3c"/><rect x="380.1" y="8" width="1" height="2" fill="#3c3c3c"/><rect x="391.0" y="5.700" width="1" height="6" fill="#3c3c3c"/><rect x="401.9" y="8" width="1" height="2" fill="#3c3c3c"/><rect x="412.8" y="8" width="1" height="2" fill="#3c3c3c"/><rect x="423.6" y="8" width="1" height="2" fill="#3c3c3c"/><rect x="445.4" y="8" width="1" height="2" fill="#3c3c3c"/><rect x="456.2" y="8" width="1" height="2" fill="#3c3c3c"/><rect x="467.1" y="8" width="1" height="2" fill="#3c3c3c"/><rect x="478.0" y="5.700" width="1" height="6" fill="#3c3c3c"/><rect x="488.9" y="8" width="1" height="2" fill="#3c3c3c"/><rect x="499.8" y="8" width="1" height="2" fill="#3c3c3c"/><rect x="510.6" y="8" width="1" height="2" fill="#3c3c3c"/><rect x="532.4" y="8" width="1" height="2" fill="#3c3c3c"/><rect x="543.2" y="8" width="1" height="2" fill="#3c3c3c"/><rect x="554.1" y="8" width="1" height="2" fill="#3c3c3c"/><rect x="565.0" y="5.700" width="1" height="6" fill="#3c3c3c"/><rect x="575.9" y="8" width="1" height="2" fill="#3c3c3c"/><rect x="586.8" y="8" width="1" height="2" fill="#3c3c3c"/><rect x="597.6" y="8" width="1" height="2" fill="#3c3c3c"/><rect x="619.4" y="8" width="1" height="2" fill="#3c3c3c"/><rect x="630.2" y="8" width="1" height="2" fill="#3c3c3c"/><rect x="641.1" y="8" width="1" height="2" fill="#3c3c3c"/><rect x="652.0" y="5.700" width="1" height="6" fill="#3c3c3c"/><rect x="662.9" y="8" width="1" height="2" fill="#3c3c3c"/><rect x="673.8" y="8" width="1" height="2" fill="#3c3c3c"/><rect x="684.6" y="8" width="1" height="2" fill="#3c3c3c"/><rect x="706.4" y="8" width="1" height="2" fill="#3c3c3c"/><rect x="717.2" y="8" width="1" height="2" fill="#3c3c3c"/><rect x="728.1" y="8" width="1" height="2" fill="#3c3c3c"/></svg>
<span class="t" style="left:814.8px;top:210.0px;font-size:12.5px;line-height:14px;color:#555;">1</span>
<span class="t" style="left:988.7px;top:210.0px;font-size:12.5px;line-height:14px;color:#555;">1</span>
<span class="t" style="left:1075.7px;top:210.0px;font-size:12.5px;line-height:14px;color:#555;">2</span>
<span class="t" style="left:1162.7px;top:210.0px;font-size:12.5px;line-height:14px;color:#555;">3</span>
<span class="t" style="left:1249.7px;top:210.0px;font-size:12.5px;line-height:14px;color:#555;">4</span>
<span class="t" style="left:1336.7px;top:210.0px;font-size:12.5px;line-height:14px;color:#555;">5</span>
<span class="t" style="left:1423.7px;top:210.0px;font-size:12.5px;line-height:14px;color:#555;">6</span>
<span class="t" style="left:1510.7px;top:210.0px;font-size:12.5px;line-height:14px;color:#555;">7</span>
<svg style="left:900px;top:204px;z-index:5;" width="11" height="28" viewBox="0 0 11 28"><path d="M.5.500h10v4l-5 5-5-5z" fill="#fff" stroke="#8a8a8a" stroke-width="1"/><path d="M.5 22.500v-5l5-5 5 5v5z" fill="#fff" stroke="#8a8a8a" stroke-width="1"/><rect x=".5" y="22.500" width="10" height="5" fill="#fff" stroke="#8a8a8a" stroke-width="1"/></svg>
<svg style="left:1465px;top:215.8px;" width="11" height="10" viewBox="0 0 11 10"><path d="M.5 9.500v-4l5-5 5 5v4z" fill="#fff" stroke="#8a8a8a" stroke-width="1"/></svg>
<div style="left:819px;top:232px;width:739px;height:769px;background:#cdcdcd;"></div>
<div style="left:820px;top:232px;width:737px;height:769px;background:#fff;"></div>
<span class="t" style="left:1349.7px;top:244.0px;font-size:11px;line-height:12px;letter-spacing:0.722px;color:#808080;">OMB Control Number:</span>
<span class="t" style="left:1100.0px;top:287.0px;font-size:16.4px;line-height:18px;letter-spacing:0.357px;color:#000;font-weight:700;">15.</span>
<span class="t" style="left:1135.3px;top:287.0px;font-size:16.4px;line-height:18px;letter-spacing:0.012px;color:#000;font-weight:700;">Choice 1 (the risk)</span>
<div style="left:1134px;top:284px;width:1px;height:23px;background:#000;"></div>
<span class="t" style="left:906.3px;top:353.0px;font-size:12.2px;line-height:14px;letter-spacing:-0.239px;color:#000;font-weight:700;">Imagine that you have to choose between two options:</span>
<svg style="left:1003px;top:365px;" width="42" height="3" viewBox="0 0 42 3"><path d="M0 1.200h42" stroke="#5b4dff" stroke-width="1.500" stroke-dasharray="2.200 1.600"/></svg>
<span class="t" style="left:933.4px;top:380.0px;font-size:12.2px;line-height:14px;color:#000;">Option A involves risk of a period of long-term illness caused by foodborne illness.</span>
<span class="t" style="left:933.4px;top:407.0px;font-size:12.2px;line-height:14px;letter-spacing:-0.009px;color:#000;">Option B avoids the risk of long-term illness caused by foodborne illness, but at a cost.</span>
<span class="t" style="left:906.3px;top:435.0px;font-size:12.2px;line-height:14px;letter-spacing:-0.053px;color:#000;">These figures represent the chances of experiencing Option A and Option B.</span>
<span class="t" style="left:985.7px;top:470.0px;font-size:12.2px;line-height:14px;letter-spacing:-0.392px;color:#000;font-weight:700;">Option A</span>
<span class="t" style="left:1309.0px;top:466.0px;font-size:12.2px;line-height:14px;letter-spacing:-0.492px;color:#000;font-weight:700;">Option B</span>
<div style="left:911px;top:492px;width:199px;height:99px;background:#f2f2f2;"></div>
<div style="left:1239px;top:492px;width:199px;height:100px;background:#f2f2f2;"></div>
<span class="t" style="left:928.1px;top:497.0px;font-size:12.2px;line-height:14px;letter-spacing:-0.103px;color:#000;">Chances of having a long-term</span>
<span class="t" style="left:922.7px;top:515.0px;font-size:12.2px;line-height:14px;letter-spacing:0.169px;color:#000;">health outcome after foodborne</span>
<span class="t" style="left:993.6px;top:532.0px;font-size:12.2px;line-height:14px;letter-spacing:-0.244px;color:#000;">illness</span>
<span class="t" style="left:965.5px;top:550.0px;font-size:12.2px;line-height:14px;letter-spacing:-0.176px;color:#000;font-weight:700;">106 out of 1,000</span>
<span class="t" style="left:1256.1px;top:498.0px;font-size:12.2px;line-height:14px;letter-spacing:-0.103px;color:#000;">Chances of having a long-term</span>
<span class="t" style="left:1250.7px;top:516.0px;font-size:12.2px;line-height:14px;letter-spacing:0.169px;color:#000;">health outcome after foodborne</span>
<span class="t" style="left:1321.6px;top:533.0px;font-size:12.2px;line-height:14px;letter-spacing:-0.244px;color:#000;">illness</span>
<span class="t" style="left:1299.7px;top:551.0px;font-size:12.2px;line-height:14px;letter-spacing:-0.137px;color:#000;font-weight:700;">0 out of 1,000</span>
<svg style="left:906.9px;top:615.6px;" width="560" height="330" viewBox="0 0 560 330"><defs><pattern id="pb" width="6.806" height="13.05" patternUnits="userSpaceOnUse"><g fill="#4472c4"><circle cx="3.050" cy=".950" r=".950"/><path d="M1.300 2.300h3.500l1.300 3.800h-1l-.5-1.200v1.600H1.500V4.900L1 6.100H0z"/><path d="M1.600 6.500h2.900v5H3.300V7.800h-.5v3.700H1.600z" opacity=".96"/></g></pattern><pattern id="po" width="6.806" height="13.05" patternUnits="userSpaceOnUse"><g fill="#ed7d31"><circle cx="3.050" cy=".950" r=".950"/><path d="M1.300 2.300h3.500l1.300 3.800h-1l-.5-1.200v1.600H1.500V4.900L1 6.100H0z"/><path d="M1.600 6.500h2.900v5H3.300V7.800h-.5v3.700H1.600z" opacity=".96"/></g></pattern></defs><g transform="scale(1.0025,1)"><rect x="0" y="0" width="272.24" height="324.75" fill="url(#pb)"/><rect x="0" y="0" width="272.24" height="26.10" fill="#fff"/><rect x="0" y="0" width="272.24" height="26.10" fill="url(#po)"/><rect x="0" y="26.10" width="176.96" height="13.05" fill="#fff"/><rect x="0" y="26.10" width="176.96" height="13.05" fill="url(#po)"/></g><g transform="translate(283.8,0)"><rect x="0" y="0" width="272.24" height="324.75" fill="url(#pb)"/></g></svg>
<div style="left:1899px;top:232px;width:20px;height:768px;background:#f3f3f3;"></div>
<div style="left:1899px;top:234px;width:19px;height:19px;background:#fff;box-sizing:border-box;border:1px solid #8a8a8a;"></div>
<svg style="left:1904px;top:240px;" width="9" height="6" viewBox="0 0 9 6"><path d="M0 5.500L4.500.5 9 5.500z" fill="#222"/></svg>
<div style="left:1899px;top:979px;width:19px;height:19px;background:#fff;box-sizing:border-box;border:1px solid #8a8a8a;"></div>
<svg style="left:1904px;top:986px;" width="9" height="6" viewBox="0 0 9 6"><path d="M0 .5L4.500 5.500 9 .5z" fill="#222"/></svg>
<div style="left:1899px;top:585px;width:19px;height:21px;background:#fff;box-sizing:border-box;border:1px solid #8a8a8a;"></div>
<div style="left:11px;top:1000px;width:1908px;height:1px;background:#c8c8c8;"></div>
<div style="left:11px;top:1001px;width:1908px;height:26px;background:#f3f2f1;"></div>
<span class="t" style="left:21.2px;top:1008.0px;font-size:12.3px;line-height:14px;letter-spacing:0.285px;">Page 18 of 37</span>
<span class="t" style="left:132.8px;top:1008.0px;font-size:12.3px;line-height:14px;letter-spacing:0.458px;">4167 words</span>
<svg style="left:225px;top:1006px;" width="18" height="17" viewBox="0 0 18 17"><path d="M.7 1.200h7.800v11.300H.7zM8.500 1.200h7.300v6.300" fill="none" stroke="#3b3a39" stroke-width="1.300"/><path d="M10.300 9.300l6.700 6.700M17 9.300L10.300 16" stroke="#3b3a39" stroke-width="1.300"/></svg>
<span class="t" style="left:268.3px;top:1008.0px;font-size:12.3px;line-height:14px;letter-spacing:0.246px;">Text Predictions: On</span>
<svg style="left:409px;top:1005px;" width="19" height="18" viewBox="0 0 19 18"><rect x=".7" y="1.700" width="16" height="14" fill="none" stroke="#3b3a39" stroke-width="1.300"/><path d="M.7 5h16M3.500 8.500h3M3.500 12h3" stroke="#3b3a39" stroke-width="1.200"/><circle cx="13" cy="12" r="4.600" fill="#f3f2f1" stroke="#3b3a39" stroke-width="1.300"/><circle cx="13" cy="12" r="2.200" fill="#3b3a39"/></svg>
<svg style="left:448px;top:1004px;" width="19" height="20" viewBox="0 0 19 20"><circle cx="8" cy="3" r="2.100" fill="none" stroke="#3b3a39" stroke-width="1.300"/><path d="M1 6.500l5 1.500v4l-3 7M15 6.500l-5 1.500v3M6 12l2-1" fill="none" stroke="#3b3a39" stroke-width="1.300"/><path d="M10 12l7.500 7.500M17.500 12L10 19.500" stroke="#3b3a39" stroke-width="1.300"/></svg>
<span class="t" style="left:470.0px;top:1008.0px;font-size:12.3px;line-height:14px;letter-spacing:0.169px;">Accessibility: Investigate</span>
<svg style="left:1464px;top:1005px;" width="18" height="18" viewBox="0 0 18 18"><path d="M.7 4.300V.7h3.600M13.700.7h3.600v3.600M17.300 13.700v3.600h-3.600M4.300 17.300H.7v-3.600" fill="none" stroke="#3b3a39" stroke-width="1.400"/><path d="M4.300 3.700h5.800l3.400 3.400v7.400H4.300z" fill="none" stroke="#3b3a39" stroke-width="1.400"/><path d="M10 3.700v3.500h3.500" fill="none" stroke="#3b3a39" stroke-width="1.100"/></svg>
<span class="t" style="left:1485.5px;top:1008.0px;font-size:12.3px;line-height:14px;letter-spacing:-0.372px;">Focus</span>
<svg style="left:1549px;top:1005.5px;" width="17" height="17" viewBox="0 0 17 17"><path d="M8.500 1.800v13.500M8.500 1.800q-1-1-2.500-1H.8v12.700h5.200q1.500 0 2.500 1.800q1-1.800 2.500-1.800h5.200V.8H11q-1.500 0-2.500 1z" fill="none" stroke="#3b3a39" stroke-width="1.400"/><path d="M2.800 3.800h3.700M2.800 6.200h3.700M2.800 8.600h3.700M2.800 11h3.700M10.500 3.800h3.700M10.500 6.200h3.700M10.500 8.600h3.700M10.500 11h3.700" stroke="#797775" stroke-width="1.200"/></svg>
<div style="left:1583px;top:1001px;width:50px;height:26px;background:#d2d0ce;"></div>
<svg style="left:1600px;top:1005.5px;" width="14" height="18" viewBox="0 0 14 18"><rect x=".8" y=".8" width="12.400" height="16" fill="#e4e2e0" stroke="#3b3a39" stroke-width="1.500"/><path d="M3 4h8M3 6.600h8M3 9.200h8M3 11.800h8M3 14.400h8" stroke="#3b3a39" stroke-width="1.300"/></svg>
<svg style="left:1649px;top:1005px;" width="19" height="19" viewBox="0 0 19 19"><path d="M16.300 8V.8H.8v14.700H8" fill="none" stroke="#3b3a39" stroke-width="1.500"/><path d="M.8 3.800h15.500M3.200 6.800h8M3.200 9.600h4.500M3.200 12.400h3.500" stroke="#3b3a39" stroke-width="1.300"/><circle cx="13.300" cy="13.300" r="5" fill="#f3f2f1" stroke="#3b3a39" stroke-width="1.400"/><path d="M8.300 13.300h10M13.300 8.300v10" stroke="#3b3a39" stroke-width="1"/><ellipse cx="13.300" cy="13.300" rx="2.300" ry="5" fill="none" stroke="#3b3a39" stroke-width="1"/></svg>
<div style="left:1690px;top:1013.5px;width:10px;height:1px;background:#555;"></div>
<div style="left:1706px;top:1013.5px;width:125px;height:1px;background:#666;"></div>
<div style="left:1768px;top:1011px;width:1px;height:6px;background:#666;"></div>
<div style="left:1748px;top:1007px;width:6px;height:14.5px;background:#333;"></div>
<div style="left:1837px;top:1013.5px;width:10px;height:1px;background:#555;"></div>
<div style="left:1841.5px;top:1009px;width:1px;height:10px;background:#555;"></div>
<span class="t" style="left:1863.3px;top:1008.0px;font-size:12.3px;line-height:14px;letter-spacing:-0.456px;">73%</span>
<div style="left:10px;top:1027px;width:1910px;height:1px;background:#2b579a;"></div>
<div style="left:0px;top:1028px;width:1920px;height:1px;background:#f2f2f2;"></div>
<div style="left:0px;top:1029px;width:1920px;height:1px;background:#c4c6c8;"></div>
<div style="left:1859px;top:1028px;width:28px;height:1.5px;background:#3c7aa8;"></div>
<div style="left:0px;top:1030px;width:1920px;height:50px;background:linear-gradient(90deg,#22363f 0%,#21343f 45%,#1e3042 65%,#1a2a47 82%,#172649 100%);"></div>
<svg style="left:19.5px;top:1045px;" width="21" height="21" viewBox="0 0 21 21"><path d="M0 3l8.500-1.200v8H0zM9.800 1.600L21 0v9.800H9.800zM0 11.200h8.500v8L0 18zM9.800 11.200H21V21L9.800 19.400z" fill="#fff"/></svg>
<div style="left:60px;top:1030px;width:360px;height:50px;background:#f3f3f3;"></div>
<svg style="left:75px;top:1045px;" width="21" height="21" viewBox="0 0 21 21"><circle cx="13" cy="8" r="6.300" fill="none" stroke="#111" stroke-width="1.500"/><path d="M8.500 12.500L.8 20.200" stroke="#111" stroke-width="1.600"/></svg>
<span class="t" style="left:110.5px;top:1046.0px;font-size:18px;line-height:20px;letter-spacing:0.206px;color:#1b1b1b;">Type here to search</span>
<svg style="left:439.5px;top:1045px;" width="21" height="19" viewBox="0 0 21 19"><path d="M1 0v19M12.500 0v19M1 4.500h11.500M1 14.500h11.500" fill="none" stroke="#fff" stroke-width="1.500"/><path d="M19 0v19" stroke="#fff" stroke-width="1.500" stroke-dasharray="5 2.500 4 2.500 5"/><rect x="17.700" y="6.500" width="2.600" height="3" fill="#fff"/></svg>
<svg style="left:498.8px;top:1040px;" width="30" height="30" viewBox="0 0 30 30"><circle cx="15" cy="15" r="15" fill="#fcc934"/><path d="M15 15L2 7.500A15 15 0 0 1 28 7.500z" fill="#e94235"/><path d="M15 15L2 7.500A15 15 0 0 0 13 29.900L19 18z" fill="#2da94f"/><path d="M15 15l13-7.500H15z" fill="#e94235"/><circle cx="15" cy="15" r="6.800" fill="#fff"/><circle cx="15" cy="15" r="5.400" fill="#4285f4"/></svg>
<div style="left:488.8px;top:1077px;width:51.2px;height:3px;background:#76b9ed;"></div>
<svg style="left:562px;top:1043px;" width="28" height="23" viewBox="0 0 28 23"><path d="M0 2q0-2 2-2h8l3 3h13q2 0 2 2v16q0 2-2 2H2q-2 0-2-2z" fill="#f5b93d"/><path d="M0 6h28v15q0 2-2 2H2q-2 0-2-2z" fill="#fcd462"/><path d="M6 23v-8q0-2 2-2h12q2 0 2 2v8h-4v-6H10v6z" fill="#3f8ee0"/></svg>
<div style="left:551.2px;top:1077px;width:51px;height:3px;background:#76b9ed;"></div>
<svg style="left:623px;top:1040px;" width="30" height="30" viewBox="0 0 30 30"><defs><linearGradient id="eg" x1="0" y1="0" x2="1" y2="0"><stop offset="0" stop-color="#1fa3e6"/><stop offset=".6" stop-color="#35c1b1"/><stop offset="1" stop-color="#7ad751"/></linearGradient></defs><circle cx="15" cy="15" r="15" fill="#1467b8"/><path d="M0 14A15 15 0 0 1 30 13c0 5-4 7-8 7-3 0-5-1.500-5-3 0-1.500 1.500-2 1.500-4 0-2.500-3-4.500-6.500-4.500C6 8.500 1.500 11 0 14z" fill="url(#eg)"/><path d="M8 18c0 6 5 11 12 10-7 3-15-1-17-7-1.500-5 1-10 6-11-1 2-1 5-1 8z" fill="#0d4f9e"/></svg>
<svg style="left:686px;top:1041px;" width="29" height="28" viewBox="0 0 29 28"><path d="M2 3h17l3 3v21H1z" fill="#f1f1e6" stroke="#999" stroke-width=".8"/><path d="M3 10h18v15H3z" fill="#8fd14a"/><path d="M5 14q5-6 10 0t-3 7q-5 1-7-3z" fill="#c9ee8c" stroke="#4a7a1c" stroke-width=".8"/><path d="M27 1l-9 19-1.500 3 3-2L28.500 2z" fill="#e9b634" stroke="#8a5a10" stroke-width=".6"/></svg>
<div style="left:732px;top:1030px;width:61px;height:50px;background:#47585f;"></div>
<div style="left:788px;top:1030px;width:1px;height:50px;background:#2b3b44;"></div>
<div style="left:732px;top:1077px;width:61px;height:3px;background:#76b9ed;"></div>
<svg style="left:747px;top:1041px;" width="30" height="28" viewBox="0 0 30 28"><rect x="7" y="0" width="22" height="27" rx="1.500" fill="#2b7cd3"/><rect x="7" y="0" width="22" height="7" fill="#41a5ee"/><rect x="7" y="13.500" width="22" height="7" fill="#185abd"/><rect x="7" y="20" width="22" height="7" rx="1.500" fill="#185abd" opacity=".9"/><rect x="0" y="6.500" width="15" height="15" rx="1.500" fill="#185abd"/><text x="7.500" y="18.500" font-family="Liberation Sans, sans-serif" font-size="11.500" font-weight="700" fill="#fff" text-anchor="middle">W</text></svg>
<svg style="left:809px;top:1041px;" width="30" height="28" viewBox="0 0 30 28"><rect x="7" y="0" width="22" height="27" rx="1.500" fill="#21a366"/><rect x="7" y="0" width="22" height="7" fill="#33c481"/><rect x="7" y="13.500" width="22" height="7" fill="#107c41"/><rect x="7" y="20" width="22" height="7" rx="1.500" fill="#107c41" opacity=".9"/><rect x="0" y="6.500" width="15" height="15" rx="1.500" fill="#107c41"/><text x="7.500" y="18.500" font-family="Liberation Sans, sans-serif" font-size="11.500" font-weight="700" fill="#fff" text-anchor="middle">X</text></svg>
<div style="left:799.2px;top:1077px;width:51px;height:3px;background:#76b9ed;"></div>
<svg style="left:871px;top:1041px;" width="33" height="31" viewBox="0 0 33 31"><rect x="8" y="0" width="20" height="26" rx="1.500" fill="#0a63c9"/><rect x="15" y="4" width="6.500" height="6.500" fill="#35b8f1"/><rect x="21.500" y="4" width="6.500" height="6.500" fill="#50d9ff"/><rect x="15" y="10.500" width="6.500" height="6.500" fill="#1490df"/><rect x="21.500" y="10.500" width="6.500" height="6.500" fill="#28a8ea"/><rect x="0" y="6" width="15" height="15" rx="1.500" fill="#0f78d4"/><text x="7.500" y="18" font-family="Liberation Sans, sans-serif" font-size="11.500" font-weight="700" fill="#fff" text-anchor="middle">O</text><rect x="13" y="17" width="19" height="13.500" fill="#eab56e"/><path d="M13.500 17.500l9 8 9-8" fill="none" stroke="#fff" stroke-width="1.500"/></svg>
<div style="left:860.8px;top:1077px;width:51px;height:3px;background:#76b9ed;"></div>
<svg style="left:933px;top:1040px;" width="33" height="34" viewBox="0 0 33 34"><circle cx="16" cy="5.500" r="4.500" fill="#7b83eb"/><circle cx="25.500" cy="7" r="3" fill="#5059c9"/><rect x="9" y="11" width="15" height="16" rx="3" fill="#7b83eb"/><rect x="20" y="11" width="10" height="13" rx="3" fill="#5059c9"/><rect x="0" y="7.500" width="15" height="15" rx="1.500" fill="#4b53bc"/><text x="7.500" y="19.500" font-family="Liberation Sans, sans-serif" font-size="11.500" font-weight="700" fill="#fff" text-anchor="middle">T</text><circle cx="22" cy="24" r="9.500" fill="#d8173c"/><text x="22" y="28" font-family="Liberation Sans, sans-serif" font-size="10.500" font-weight="700" fill="#fff" text-anchor="middle">9+</text></svg>
<div style="left:923px;top:1077px;width:51px;height:3px;background:#76b9ed;"></div>
<svg style="left:1554px;top:1040px;" width="28" height="28" viewBox="0 0 28 28"><defs><linearGradient id="sg" x1=".2" y1="0" x2=".8" y2="1"><stop offset="0" stop-color="#f7c21f"/><stop offset="1" stop-color="#ea5b0c"/></linearGradient></defs><circle cx="13" cy="14.600" r="12.600" fill="url(#sg)"/><circle cx="24" cy="3.500" r="3.400" fill="#d9272e"/></svg>
<span class="t" style="left:1592.5px;top:1046.0px;font-size:18px;line-height:20px;letter-spacing:-0.575px;color:#fff;">35°F  Sunny</span>
<svg style="left:1716.5px;top:1050.5px;" width="17" height="10" viewBox="0 0 17 10"><path d="M.7 9.300L8.500 1.300l7.800 8" fill="none" stroke="#fff" stroke-width="1.500"/></svg>
<svg style="left:1745px;top:1045px;" width="22" height="19" viewBox="0 0 22 19"><path d="M.7 6.500h3.800l4.500-4.500v15l-4.500-4.500H.7z" fill="none" stroke="#fff" stroke-width="1.200"/><path d="M11.500 6.500q2 3 0 6M14.500 4q3.500 5.500 0 11M17.500 1.500q5 8 0 16" fill="none" stroke="#fff" stroke-width="1.200"/></svg>
<span class="t" style="left:1783.0px;top:1035.0px;font-size:15px;line-height:17px;letter-spacing:-0.801px;color:#fff;">12:41 PM</span>
<span class="t" style="left:1778.6px;top:1058.0px;font-size:15px;line-height:17px;letter-spacing:0.021px;color:#fff;">3/19/2023</span>
<svg style="left:1869px;top:1044.5px;" width="21" height="21" viewBox="0 0 21 21"><path d="M0 0h20.500v16.500h-8l-2.300 3-2.200-3H0z" fill="#fff"/><path d="M4.500 4.500h11.500M4.500 8h11.500M4.500 11.500h7" stroke="#1a2a47" stroke-width="1.300"/></svg>
<div style="left:1914px;top:1030px;width:1px;height:50px;background:#7d8796;"></div>
</div>
</body></html>
